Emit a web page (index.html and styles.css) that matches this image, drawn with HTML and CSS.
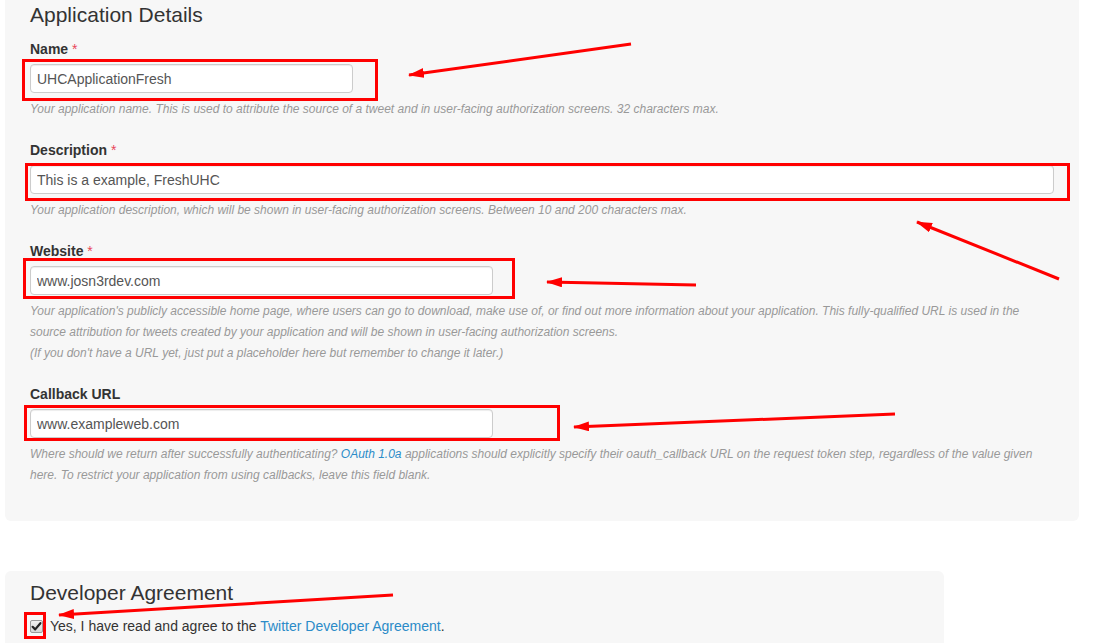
FILE: index.html
```html
<!DOCTYPE html>
<html lang="en">
<head>
<meta charset="utf-8">
<title>Application Details</title>
<link rel="stylesheet" href="styles.css">
</head>
<body>
<div class="page">
  <section class="panel panel-top">
    <h3 class="panel-title">Application Details</h3>

    <div class="field">
      <label class="field-label">Name <span class="req">*</span></label>
      <input class="field-input w-name" type="text" value="UHCApplicationFresh">
      <p class="help">Your application name. This is used to attribute the source of a tweet and in user-facing authorization screens. 32 characters max.</p>
    </div>

    <div class="field">
      <label class="field-label">Description <span class="req">*</span></label>
      <input class="field-input w-full" type="text" value="This is a example, FreshUHC">
      <p class="help">Your application description, which will be shown in user-facing authorization screens. Between 10 and 200 characters max.</p>
    </div>

    <div class="field">
      <label class="field-label">Website <span class="req">*</span></label>
      <input class="field-input w-url" type="text" value="www.josn3rdev.com">
      <p class="help">Your application's publicly accessible home page, where users can go to download, make use of, or find out more information about your application. This fully-qualified URL is used in the<br>source attribution for tweets created by your application and will be shown in user-facing authorization screens.<br>(If you don't have a URL yet, just put a placeholder here but remember to change it later.)</p>
    </div>

    <div class="field field-last">
      <label class="field-label">Callback URL</label>
      <input class="field-input w-url" type="text" value="www.exampleweb.com">
      <p class="help">Where should we return after successfully authenticating? <a class="link" href="#">OAuth 1.0a</a> applications should explicitly specify their oauth_callback URL on the request token step, regardless of the value given<br>here. To restrict your application from using callbacks, leave this field blank.</p>
    </div>
  </section>

  <section class="panel panel-agree">
    <h3 class="panel-title agree-title">Developer Agreement</h3>
    <div class="agree-row">
      <span class="checkbox">
        <svg width="11" height="11" viewBox="0 0 11 11"><path d="M1.6 5.8 L4.2 8.4 L9.4 2.2" fill="none" stroke="#222" stroke-width="2.2" stroke-linecap="round" stroke-linejoin="round"/></svg>
      </span>
      <span class="agree-text">Yes, I have read and agree to the <a class="link" href="#">Twitter Developer Agreement</a>.</span>
    </div>
  </section>
</div>

<svg class="annotations" width="1097" height="643" viewBox="0 0 1097 643">
  <defs>
    <marker id="ah" markerUnits="userSpaceOnUse" markerWidth="16" markerHeight="10" refX="15" refY="5" orient="auto">
      <path d="M0,0 L16,5 L0,10 z" fill="#f00"/>
    </marker>
  </defs>
  <g fill="none" stroke="#f00" stroke-width="3">
    <rect x="23.5" y="60.5" width="353" height="39"/>
    <rect x="26.5" y="164.5" width="1042" height="35"/>
    <rect x="24.5" y="259.5" width="489" height="38"/>
    <rect x="25.5" y="406.5" width="533" height="33"/>
    <rect x="25.5" y="613.5" width="19" height="24"/>
  </g>
  <g stroke="#f00" stroke-width="3" marker-end="url(#ah)">
    <line x1="631" y1="44" x2="409" y2="75"/>
    <line x1="1059" y1="279" x2="917" y2="222"/>
    <line x1="696" y1="285" x2="547" y2="282"/>
    <line x1="895" y1="414" x2="574" y2="427"/>
    <line x1="393" y1="595" x2="59" y2="615"/>
  </g>
</svg>
</body>
</html>
```

FILE: styles.css
```css
html, body {
  margin: 0;
  padding: 0;
  height: 643px;
  overflow: hidden;
  background: #fff;
}

body {
  position: relative;
  font-family: "Liberation Sans", Arial, sans-serif;
  color: #333;
}

.page {
  display: flex;
  flex-direction: column;
  align-items: flex-start;
}

.panel {
  background: #f7f7f7;
  border-radius: 6px;
  margin-left: 5px;
  padding: 0 25px;
  box-sizing: border-box;
}

.panel-top {
  width: 1074px;
  border-radius: 0 0 6px 6px;
  padding-top: 3px;
  padding-bottom: 35px;
}

.panel-title {
  margin: 0 0 12px;
  font-size: 21px;
  line-height: 24px;
  font-weight: normal;
  color: #333;
}

.field {
  display: flex;
  flex-direction: column;
  align-items: flex-start;
  margin-bottom: 20px;
}

.field-last {
  margin-bottom: 0;
}

.field-label {
  font-size: 14px;
  line-height: 20px;
  font-weight: bold;
  color: #333;
  margin-bottom: 5px;
}

.req {
  color: #e8475a;
  font-weight: normal;
}

.field-input {
  height: 29px;
  box-sizing: border-box;
  margin: 0;
  padding: 0 6px;
  border: 1px solid #ccc;
  border-radius: 4px;
  background: #fff;
  box-shadow: inset 0 1px 1px rgba(0, 0, 0, 0.075);
  font-family: "Liberation Sans", Arial, sans-serif;
  font-size: 14px;
  color: #555;
  outline: none;
}

.w-name { width: 323px; }
.w-url { width: 463px; }
.w-full { width: 1024px; }

.help {
  margin: 6px 0 0;
  font-size: 12px;
  line-height: 21px;
  font-style: italic;
  color: #999;
  white-space: nowrap;
}

.link {
  color: #2b8bc8;
  text-decoration: none;
}

.panel-agree {
  width: 939px;
  margin-top: 50px;
  padding-top: 10px;
  padding-bottom: 20px;
}

.agree-title {
  margin-bottom: 11px;
}

.agree-row {
  display: flex;
  align-items: center;
  gap: 7px;
  height: 20px;
}

.checkbox {
  width: 13px;
  height: 13px;
  box-sizing: border-box;
  border: 1px solid #9a9a9a;
  border-radius: 2px;
  background: linear-gradient(#f0f0f0, #d6d6d6);
  display: flex;
  align-items: center;
  justify-content: center;
  margin-top: 1px;
}

.checkbox svg {
  display: block;
}

.agree-text {
  font-size: 14px;
  line-height: 20px;
  color: #333;
}

.annotations {
  position: absolute;
  top: 0;
  left: 0;
  pointer-events: none;
}
```
